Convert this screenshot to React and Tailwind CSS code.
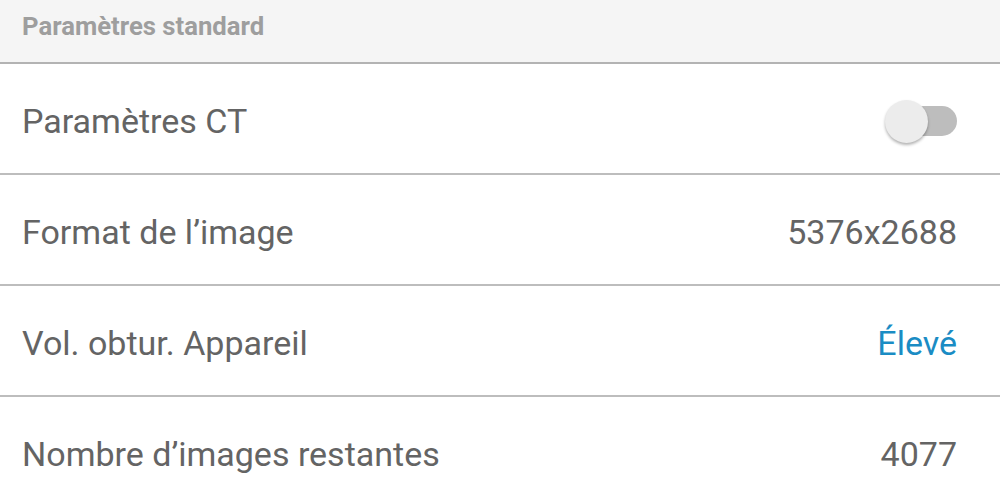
const rows = [
  { label: 'Paramètres CT', toggle: true },
  { label: 'Format de l’image', value: '5376x2688' },
  { label: 'Vol. obtur. Appareil', value: 'Élevé', accent: true },
  { label: 'Nombre d’images restantes', value: '4077' },
];

function Toggle() {
  return (
    <div className="relative w-[72px] h-[44px] flex items-center">
      <div className="absolute right-0 w-[50px] h-[30px] rounded-full bg-[#bdbdbd]" />
      <div className="absolute left-0 w-[43px] h-[43px] rounded-full bg-[#ececec] shadow-[0_2px_3px_rgba(0,0,0,0.3)]" />
    </div>
  );
}

export default function App() {
  return (
    <div className="w-[1000px] h-[500px] overflow-hidden bg-white font-['Roboto',sans-serif]">
      <div className="h-[64px] bg-[#f5f5f5] border-b-2 border-[#b3b3b3] pl-[22px] flex items-start pt-[7px]">
        <span className="text-[25.7px] font-bold text-[#9e9e9e]">Paramètres standard</span>
      </div>
      {rows.map((r) => (
        <div
          key={r.label}
          className="h-[111px] border-b-2 border-[#bdbdbd] flex items-center justify-between pl-[22px] pr-[43px] pt-[5px]"
        >
          <span className="text-[34px] text-[#646464]">{r.label}</span>
          {r.toggle ? (
            <Toggle />
          ) : (
            <span className={r.accent ? 'text-[34px] text-[#1a8cc4]' : 'text-[34px] text-[#646464]'}>
              {r.value}
            </span>
          )}
        </div>
      ))}
    </div>
  );
}
